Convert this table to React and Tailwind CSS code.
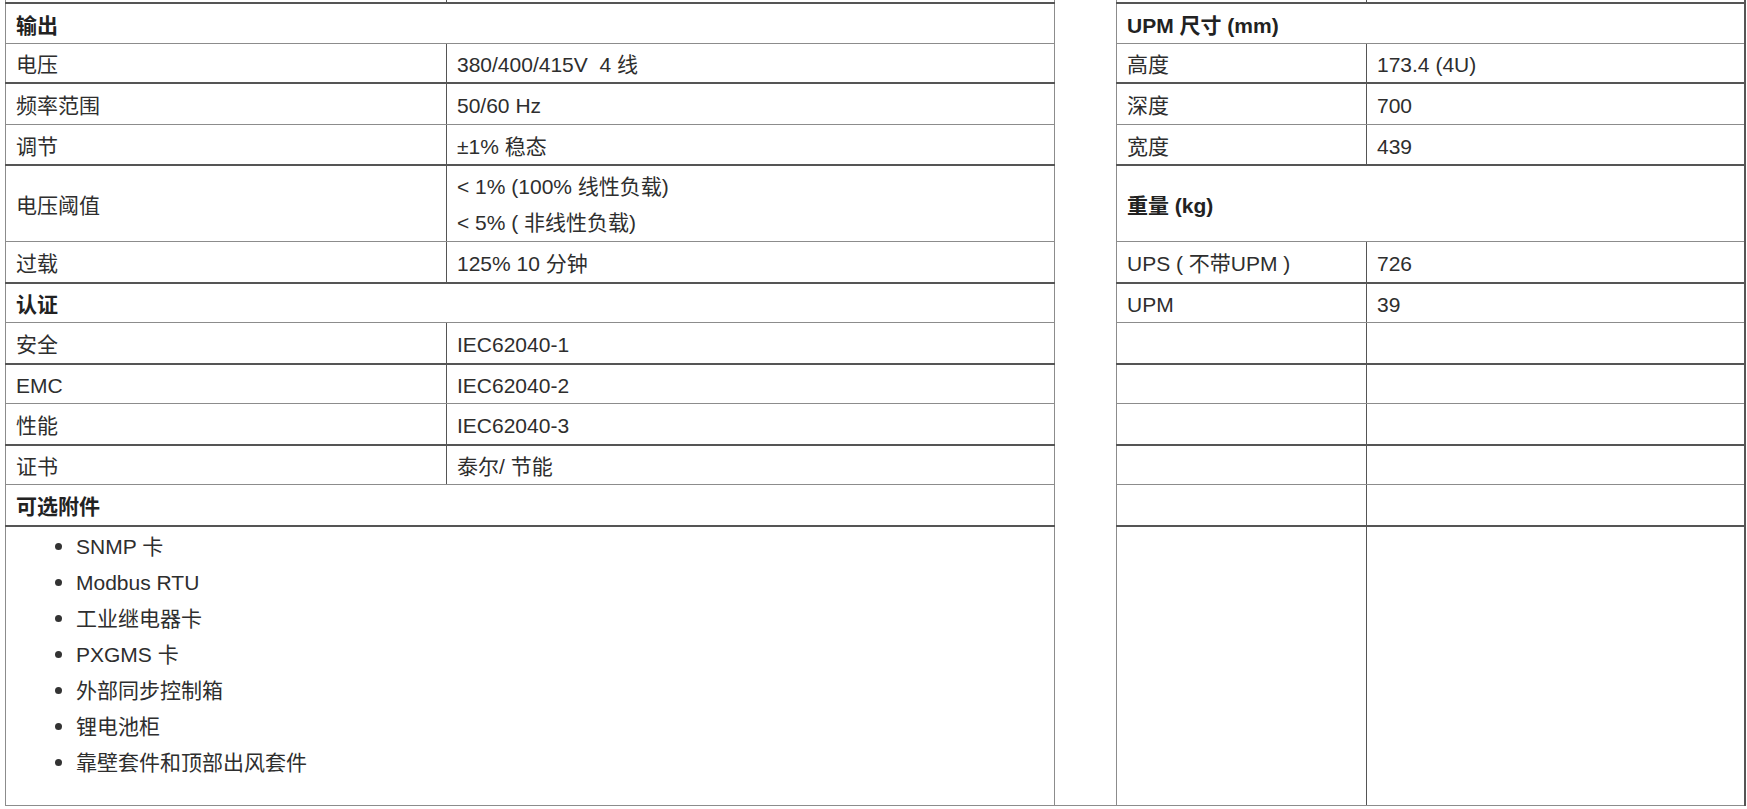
import React from "react";

const base =
  "border border-[#8c8c8c] px-[10px] pt-[5px] pb-0 align-middle leading-[24px]";
const thick = "border-b-2 border-b-[#555]";
const c1 = "border-r-[#555]";
const last = "border-r-2 border-r-[#555]";

function Row({ h, thickB, left, right }) {
  const tb = thickB ? thick : "";
  return (
    <tr className={h}>
      {left.type === "head" ? (
        <td colSpan={2} className={`${base} ${tb} font-bold text-[#222]`}>
          {left.text}
        </td>
      ) : (
        <>
          <td className={`${base} ${tb} ${c1}`}>{left.a}</td>
          <td className={`${base} ${tb} whitespace-pre`}>{left.b}</td>
        </>
      )}
      {right.type === "head" ? (
        <td colSpan={2} className={`${base} ${tb} ${last} font-bold text-[#222]`}>
          {right.text}
        </td>
      ) : (
        <>
          <td className={`${base} ${tb} ${c1} whitespace-pre`}>{right.a}</td>
          <td className={`${base} ${tb} ${last}`}>{right.b}</td>
        </>
      )}
    </tr>
  );
}

const items = [
  "SNMP 卡",
  "Modbus RTU",
  "工业继电器卡",
  "PXGMS 卡",
  "外部同步控制箱",
  "锂电池柜",
  "靠壁套件和顶部出风套件",
];

export default function App() {
  return (
    <div className="w-[1747px] h-[809px] overflow-hidden bg-white pl-[5px] font-['Liberation_Sans','Noto_Sans_CJK_SC',sans-serif] text-[21px] text-[#2e2e2e]">
      <table className="border-collapse table-fixed w-[1739px]">
        <colgroup>
          <col className="w-[441px]" />
          <col className="w-[608px]" />
          <col className="w-[62px]" />
          <col className="w-[250px]" />
          <col className="w-[378px]" />
        </colgroup>
        <tbody>
          <tr className="h-[3px]">
            <td className={`border border-[#8c8c8c] border-t-0 p-0 ${thick} ${c1}`}></td>
            <td className={`border border-[#8c8c8c] border-t-0 p-0 ${thick}`}></td>
            <td
              rowSpan={14}
              className="border border-[#8c8c8c] border-t-0 p-0"
            ></td>
            <td className={`border border-[#8c8c8c] border-t-0 p-0 ${thick} ${c1}`}></td>
            <td className={`border border-[#8c8c8c] border-t-0 p-0 ${thick} ${last}`}></td>
          </tr>
          <Row
            h="h-[40px]"
            left={{ type: "head", text: "输出" }}
            right={{ type: "head", text: "UPM 尺寸 (mm)" }}
          />
          <Row
            h="h-[40px]"
            thickB
            left={{ a: "电压", b: "380/400/415V  4 线" }}
            right={{ a: "高度", b: "173.4 (4U)" }}
          />
          <Row
            h="h-[41px]"
            left={{ a: "频率范围", b: "50/60 Hz" }}
            right={{ a: "深度", b: "700" }}
          />
          <Row
            h="h-[41px]"
            thickB
            left={{ a: "调节", b: "±1% 稳态" }}
            right={{ a: "宽度", b: "439" }}
          />
          <tr className="h-[76px]">
            <td className={`${base} ${c1}`}>电压阈值</td>
            <td className="border border-[#8c8c8c] px-[10px] pt-[3px] pb-0 align-middle leading-[36px] whitespace-pre">
              <div>&lt; 1% (100% 线性负载)</div>
              <div>&lt; 5% ( 非线性负载)</div>
            </td>
            <td colSpan={2} className={`${base} ${last} font-bold text-[#222]`}>
              重量 (kg)
            </td>
          </tr>
          <Row
            h="h-[41px]"
            thickB
            left={{ a: "过载", b: "125% 10 分钟" }}
            right={{ a: "UPS ( 不带UPM )", b: "726" }}
          />
          <Row
            h="h-[40px]"
            left={{ type: "head", text: "认证" }}
            right={{ a: "UPM", b: "39" }}
          />
          <Row
            h="h-[41px]"
            thickB
            left={{ a: "安全", b: "IEC62040-1" }}
            right={{ a: "", b: "" }}
          />
          <Row
            h="h-[40px]"
            left={{ a: "EMC", b: "IEC62040-2" }}
            right={{ a: "", b: "" }}
          />
          <Row
            h="h-[41px]"
            thickB
            left={{ a: "性能", b: "IEC62040-3" }}
            right={{ a: "", b: "" }}
          />
          <Row
            h="h-[40px]"
            left={{ a: "证书", b: "泰尔/ 节能" }}
            right={{ a: "", b: "" }}
          />
          <Row
            h="h-[41px]"
            thickB
            left={{ type: "head", text: "可选附件" }}
            right={{ a: "", b: "" }}
          />
          <tr className="h-[280px]">
            <td
              colSpan={2}
              className="border border-[#8c8c8c] px-[10px] pt-[2px] pb-0 align-top leading-[36px]"
            >
              <ul className="flex flex-col">
                {items.map((t) => (
                  <li key={t} className="flex items-center h-[36px]">
                    <span className="ml-[39px] w-[7px] h-[7px] rounded-full bg-[#333] shrink-0"></span>
                    <span className="ml-[14px]">{t}</span>
                  </li>
                ))}
              </ul>
            </td>
            <td className={`border border-[#8c8c8c] ${c1}`}></td>
            <td className={`border border-[#8c8c8c] ${last}`}></td>
          </tr>
        </tbody>
      </table>
    </div>
  );
}
